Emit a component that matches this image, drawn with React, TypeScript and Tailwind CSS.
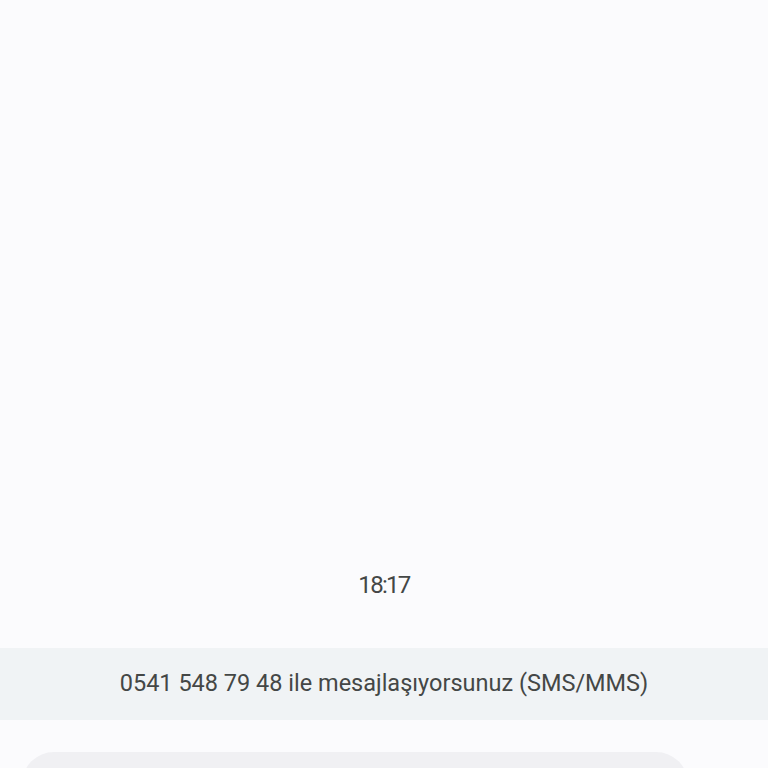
import React from "react";

export default function App() {
  return (
    <main
      className="flex flex-col h-screen overflow-hidden bg-[#fbfbfd] pt-[569px]"
      style={{ fontFamily: "Roboto, 'Noto Sans', sans-serif" }}
    >
      {/* timestamp */}
      <div className="h-8 flex items-center justify-center text-[24px] tracking-[-1.7px] text-[#444746]">
        18:17
      </div>

      {/* conversation info banner */}
      <div className="mt-[47px] h-[72px] shrink-0 flex items-center justify-center bg-[#f0f3f5] text-[23.5px] text-[#444746]">
        0541 548 79 48 ile mesajlaşıyorsunuz (SMS/MMS)
      </div>

      {/* compose field */}
      <div className="mt-8 ml-[22px] w-[666px] h-16 shrink-0 rounded-[32px] bg-[#f0f0f3]" />
    </main>
  );
}
